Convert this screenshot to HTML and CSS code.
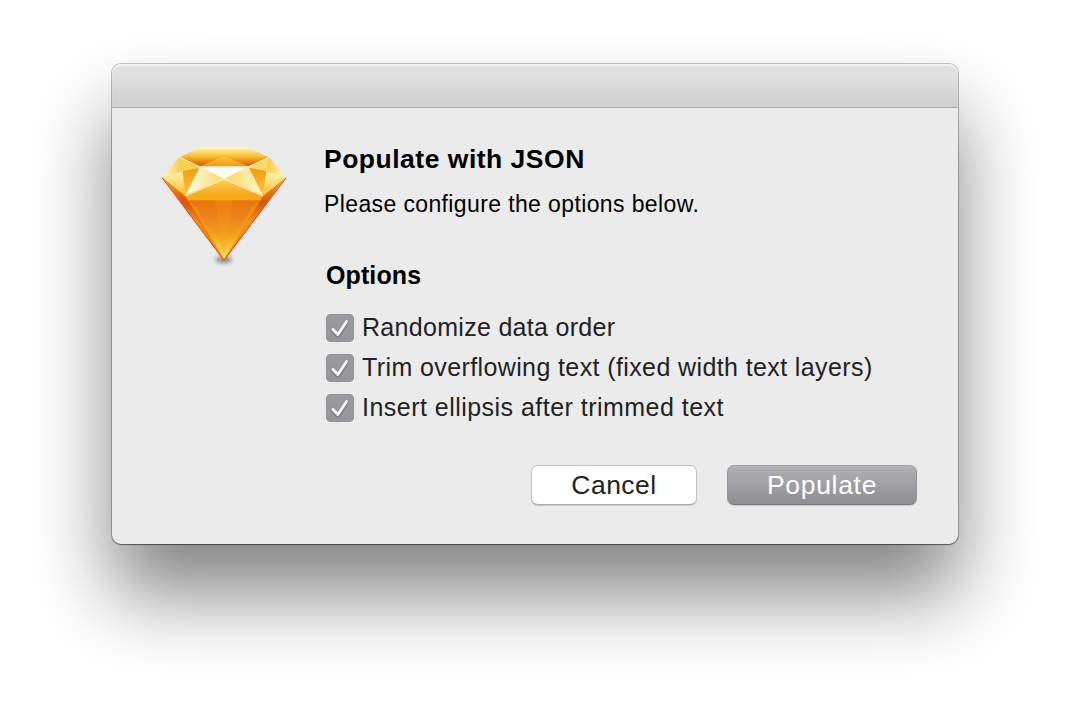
FILE: index.html
```
<!DOCTYPE html>
<html lang="en">
<head>
<meta charset="utf-8">
<title>Populate with JSON</title>
<link rel="stylesheet" href="styles.css">
</head>
<body>
<main class="dialog">
  <header class="titlebar"></header>
  <div class="content">
    <svg class="gem" viewBox="0 0 450 420" aria-hidden="true">
      <defs>
        <linearGradient id="crown" x1="0" y1="0" x2="0" y2="1"><stop offset="0" stop-color="#fff9ce"/><stop offset=".25" stop-color="#fbdc68"/><stop offset=".55" stop-color="#f6b52a"/><stop offset="1" stop-color="#e96c0c"/></linearGradient>
        <linearGradient id="peak" x1="0" y1="0" x2="0" y2="1"><stop offset="0" stop-color="#fdc93a"/><stop offset="1" stop-color="#f29a12"/></linearGradient>
        <linearGradient id="rim" x1="0" y1="0" x2="0" y2="1"><stop offset="0" stop-color="#ef9c13" stop-opacity="0"/><stop offset="1" stop-color="#e2560a"/></linearGradient>
        <linearGradient id="side" x1="0" y1="0" x2="0" y2="1"><stop offset="0" stop-color="#fbc02c"/><stop offset=".45" stop-color="#fff0a0"/><stop offset="1" stop-color="#f8ba2c"/></linearGradient>
        <linearGradient id="outer"><stop offset="0" stop-color="#fffbd0"/><stop offset="1" stop-color="#fac744"/></linearGradient>
        <linearGradient id="outer2"><stop offset="0" stop-color="#fac744"/><stop offset="1" stop-color="#fffbd0"/></linearGradient>
        <linearGradient id="wedge" x1="0" y1="0" x2="0" y2="1"><stop offset="0" stop-color="#f49a10"/><stop offset="1" stop-color="#fcc53a"/></linearGradient>
        <linearGradient id="lt"><stop offset="0" stop-color="#fffef0"/><stop offset="1" stop-color="#fbd765"/></linearGradient>
        <linearGradient id="rt"><stop offset="0" stop-color="#fbd765"/><stop offset="1" stop-color="#fff7c5"/></linearGradient>
        <linearGradient id="front" x1="0" y1="0" x2="0" y2="1"><stop offset="0" stop-color="#fbd35a"/><stop offset="1" stop-color="#f6a91b"/></linearGradient>
        <linearGradient id="body" x1="0" y1="0" x2="0" y2="1"><stop offset="0" stop-color="#e87209"/><stop offset=".3" stop-color="#ec8018"/><stop offset=".65" stop-color="#f5aa20"/><stop offset="1" stop-color="#ffe45a"/></linearGradient>
        <linearGradient id="flank" x1="0" y1="0" x2="0" y2="1"><stop offset="0" stop-color="#f3a824"/><stop offset=".2" stop-color="#e76d10"/><stop offset=".3" stop-color="#d95409"/><stop offset=".55" stop-color="#f3921a"/><stop offset="1" stop-color="#f0790f"/></linearGradient>
        <filter id="soft" x="-50%" y="-80%" width="200%" height="260%"><feGaussianBlur stdDeviation="7"/></filter>
      </defs>
      <ellipse cx="221" cy="374" rx="25" ry="10" fill="#777" opacity=".85" filter="url(#soft)"/>
      <path d="M38 128 108 210 338 210 407 128 225 365z" fill="#999" opacity=".3" filter="url(#soft)"/>
      <path d="M37 127 107 183H338L408 127 222 376z" fill="url(#flank)"/>
      <path d="M107 183H338L327 205 222 374 118 205z" fill="url(#body)"/>
      <path d="M107 183 118 205 222 374 130 235z" fill="#e5630c" opacity=".5"/>
      <path d="M118 200 139 215 222 374z" fill="#f7a720" opacity=".35"/>
      <path d="M327 200 305 215 222 374z" fill="#f7a720" opacity=".35"/>
      <path d="M139 215Q222 204 305 215L222 340z" fill="#e9701a" opacity=".12"/>
      <path d="M194 190H250L222 374z" fill="#f9a51b" opacity=".22"/>
      <path d="M37 129 222 376 408 129" fill="none" stroke="#de430b" stroke-width="3"/>
      <path d="M109 186H336L331 196H115z" fill="#f9ad15"/>
      <path d="M107 177H338V187H107z" fill="#f9a91e"/>
      <path d="M154 36H290L357 67 294 94H151L89 67z" fill="url(#crown)"/>
      <path d="M89 67 221 64 151 94z" fill="url(#rim)"/>
      <path d="M357 67 221 64 294 94z" fill="url(#rim)"/>
      <path d="M151 94 223 63 294 94z" fill="url(#peak)"/>
      <path d="M89 67 37 127 107 183 151 98z" fill="url(#side)"/>
      <path d="M89 67 37 127 98 108z" fill="url(#outer)"/>
      <path d="M89 67 98 108 151 98z" fill="#fbcf50"/>
      <path d="M151 98 98 108 107 183z" fill="url(#wedge)"/>
      <path d="M357 67 408 127 338 183 294 98z" fill="url(#side)"/>
      <path d="M357 67 408 127 349 108z" fill="url(#outer2)"/>
      <path d="M357 67 349 108 294 98z" fill="#fbd668"/>
      <path d="M294 98 349 108 338 183z" fill="url(#wedge)"/>
      <path d="M151 95H294L222 132z" fill="#fffef3"/>
      <path d="M151 95 222 132 107 183z" fill="url(#lt)"/>
      <path d="M294 95 338 183 222 132z" fill="url(#rt)"/>
      <path d="M222 132 338 180H107z" fill="url(#front)"/>
      <path d="M89 67 151 96H294L357 67M151 96 107 183 222 132 338 183 294 96" fill="none" stroke="#fffbd5" stroke-width="2.5"/>
    </svg>
    <section class="details">
      <h1 class="title">Populate with JSON</h1>
      <p class="message">Please configure the options below.</p>
      <h2 class="subtitle">Options</h2>
      <div class="options">
        <label class="option first"><svg class="check" viewBox="0 0 28 28"><path d="M7 15.5 11.8 20.5 20.5 7.5"/></svg><span>Randomize data order</span></label>
        <label class="option"><svg class="check" viewBox="0 0 28 28"><path d="M7 15.5 11.8 20.5 20.5 7.5"/></svg><span>Trim overflowing text (fixed width text layers)</span></label>
        <label class="option last"><svg class="check" viewBox="0 0 28 28"><path d="M7 15.5 11.8 20.5 20.5 7.5"/></svg><span>Insert ellipsis after trimmed text</span></label>
      </div>
    </section>
  </div>
  <footer class="actions">
    <button class="button cancel">Cancel</button>
    <button class="button primary">Populate</button>
  </footer>
</main>
</body>
</html>
```
FILE: styles.css
```
* { box-sizing: border-box; }
body {
  margin: 0;
  height: 704px;
  padding: 64px 0 0 112px;
  overflow: hidden;
  background: #fff;
  font-family: "Liberation Sans", Arial, sans-serif;
  color: #000;
}
.dialog {
  width: 846px;
  height: 480px;
  border-radius: 9px;
  background: #ebebeb;
  box-shadow: 0 0 0 1px rgba(0,0,0,.23), 0 1px 1px rgba(0,0,0,.35), 0 50px 80px rgba(0,0,0,.49);
}
.titlebar {
  height: 44px;
  border-radius: 9px 9px 0 0;
  border-bottom: 1px solid #acacac;
  background: linear-gradient(#e5e5e5, #cfcfcf);
  box-shadow: inset 0 2px 1px #f3f3f3;
}
.content { display: flex; height: 357px; padding: 27px 0 0 38px; }
.gem { width: 150px; height: 140px; flex: none; }
.details { padding: 8px 0 0 24px; white-space: nowrap; }
.title { margin: 0; font-size: 26.5px; line-height: 32px; letter-spacing: .5px; }
.message { margin: 15px 0 0; font-size: 23px; line-height: 28px; letter-spacing: .38px; }
.subtitle { margin: 41px 0 0 2px; font-size: 25px; line-height: 32px; letter-spacing: .1px; }
.options { display: grid; gap: 12px; margin: 23px 0 0 2px; }
.option { display: flex; gap: 8px; height: 28px; color: #222; font-size: 25px; line-height: 26px; letter-spacing: .39px; }
.first { letter-spacing: .3px; }
.last { letter-spacing: .47px; }
.check { width: 28px; height: 28px; border-radius: 5px; background: linear-gradient(#9b9a9f, #97969b); box-shadow: inset 0 0 0 1px #929196; }
.check path { fill: none; stroke: #fff; stroke-width: 2.8; stroke-linecap: round; stroke-linejoin: round; filter: drop-shadow(0 1px 1px rgba(0,0,0,.35)); }
.actions { display: flex; justify-content: flex-end; gap: 30px; padding-right: 41px; }
.button { height: 40px; padding: 0 0 1px; border: 1px solid #c3c3c3; border-bottom-color: #aaa; border-radius: 7px; font: 26.5px/38px "Liberation Sans", Arial, sans-serif; letter-spacing: .7px; box-shadow: 0 1px 1px rgba(0,0,0,.15); }
.cancel { width: 166px; background: #fff; color: #222; letter-spacing: .5px; }
.primary { width: 190px; background: linear-gradient(#b2b1b6, #8e8d92); border-color: #a2a1a6 #95949a #77767c; color: #fff; }
```
